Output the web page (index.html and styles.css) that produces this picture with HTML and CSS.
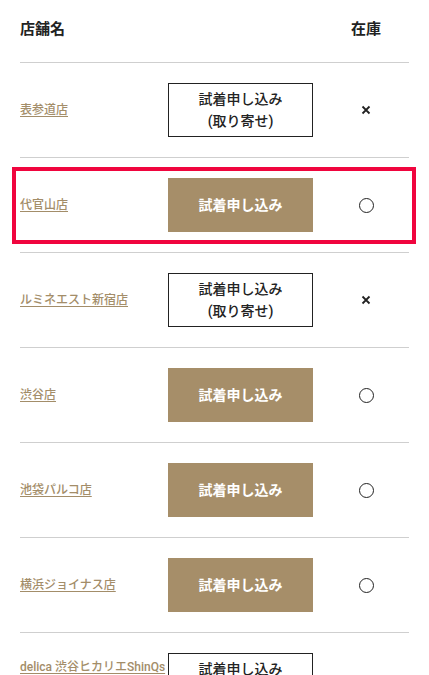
FILE: index.html
```html
<!DOCTYPE html>
<html lang="ja">
<head>
<meta charset="utf-8">
<link rel="stylesheet" href="styles.css">
</head>
<body>
<div class="stores">
  <div class="head">
    <div class="h-name">店舗名</div>
    <div class="h-btn"></div>
    <div class="h-stock">在庫</div>
  </div>

  <div class="row">
    <a class="name" href="#">表参道店</a>
    <div class="btn outline">試着申し込み<br>(取り寄せ)</div>
    <div class="stock"><svg class="cross" viewBox="0 0 10 10"><path d="M1.5 1.5L8.5 8.5M8.5 1.5L1.5 8.5"/></svg></div>
  </div>

  <div class="row highlighted">
    <a class="name" href="#">代官山店</a>
    <div class="btn filled">試着申し込み</div>
    <div class="stock"><span class="circle"></span></div>
    <div class="mark"></div>
  </div>

  <div class="row">
    <a class="name" href="#">ルミネエスト新宿店</a>
    <div class="btn outline">試着申し込み<br>(取り寄せ)</div>
    <div class="stock"><svg class="cross" viewBox="0 0 10 10"><path d="M1.5 1.5L8.5 8.5M8.5 1.5L1.5 8.5"/></svg></div>
  </div>

  <div class="row">
    <a class="name" href="#">渋谷店</a>
    <div class="btn filled">試着申し込み</div>
    <div class="stock"><span class="circle"></span></div>
  </div>

  <div class="row">
    <a class="name" href="#">池袋パルコ店</a>
    <div class="btn filled">試着申し込み</div>
    <div class="stock"><span class="circle"></span></div>
  </div>

  <div class="row">
    <a class="name" href="#">横浜ジョイナス店</a>
    <div class="btn filled">試着申し込み</div>
    <div class="stock"><span class="circle"></span></div>
  </div>

  <div class="row">
    <a class="name" href="#">delica 渋谷ヒカリエShinQs店</a>
    <div class="btn outline">試着申し込み<br>(取り寄せ)</div>
    <div class="stock"><svg class="cross" viewBox="0 0 10 10"><path d="M1.5 1.5L8.5 8.5M8.5 1.5L1.5 8.5"/></svg></div>
  </div>
</div>
</body>
</html>
```

FILE: styles.css
```css
html, body {
  margin: 0;
  padding: 0;
  background: #fff;
}
body {
  font-family: Roboto, "Noto Sans CJK JP", sans-serif;
  color: #222;
}
.stores {
  padding: 0 20px;
}
.head {
  display: grid;
  grid-template-columns: 148px 145px 1fr;
  padding: 18px 0 22px;
  border-bottom: 1px solid #cfcfcf;
  font-size: 15px;
  line-height: 22px;
  font-weight: 700;
  color: #222;
}
.h-stock {
  text-align: center;
  padding-left: 10px;
}
.row {
  position: relative;
  display: grid;
  grid-template-columns: 148px 145px 1fr;
  align-items: center;
  padding: 20px 0;
  border-bottom: 1px solid #cfcfcf;
}
.name {
  font-size: 12px;
  line-height: 26px;
  font-weight: 500;
  color: #a38d69;
  text-decoration: underline;
  text-underline-offset: 2px;
}
.btn {
  box-sizing: border-box;
  height: 54px;
  display: flex;
  align-items: center;
  justify-content: center;
  text-align: center;
  font-size: 14px;
  line-height: 22px;
}
.outline {
  border: 1px solid #222;
  color: #222;
  font-weight: 500;
}
.filled {
  background: #a68e69;
  color: #fff;
  font-weight: 700;
}
.stock {
  display: flex;
  justify-content: center;
  align-items: center;
  padding-left: 10px;
}
.cross {
  width: 10px;
  height: 10px;
  stroke: #222;
  stroke-width: 1.8;
  fill: none;
}
.circle {
  box-sizing: border-box;
  width: 15px;
  height: 15px;
  border: 1px solid #222;
  border-radius: 50%;
}
.mark {
  position: absolute;
  left: -8px;
  right: -7px;
  top: 9px;
  bottom: 8px;
  border: 4px solid #f0053e;
}
```
